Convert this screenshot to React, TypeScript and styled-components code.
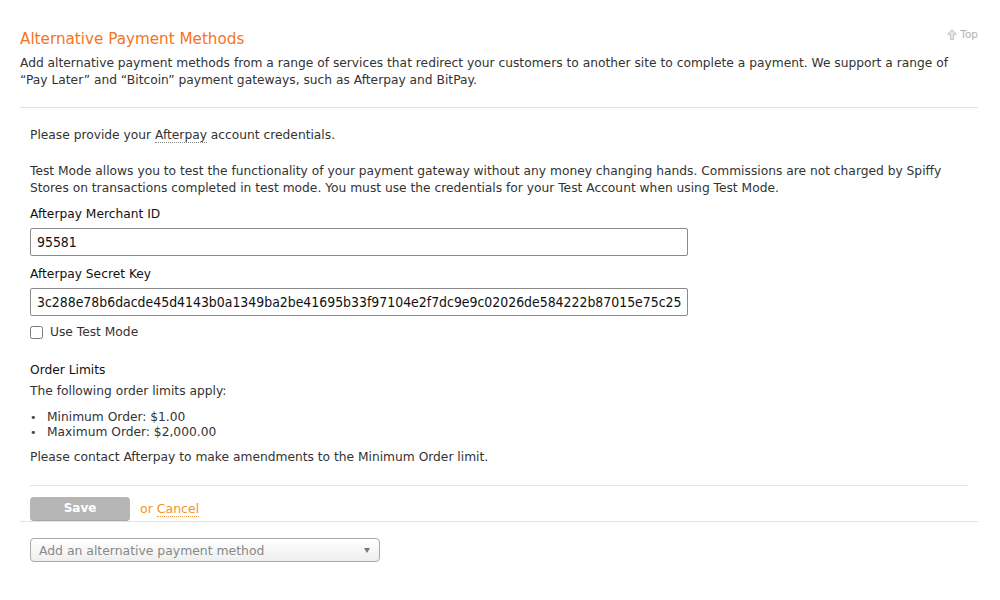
import React from "react";
import styled, { createGlobalStyle } from "styled-components";

const Global = createGlobalStyle`
  html, body { margin: 0; padding: 0; background: #fff; }
  body { font-family: "DejaVu Sans", "Lucida Grande", sans-serif; font-size: 12.25px; color: #333; }
`;

const Page = styled.div`
  padding: 25px 22px 30px 20px;
  width: 958px;
`;

const Header = styled.div`
  display: flex;
  justify-content: space-between;
  align-items: flex-start;
`;

const Title = styled.h2`
  margin: 4px 0 0;
  font-size: 15.2px;
  font-weight: normal;
  color: #f47421;
  line-height: 20px;
`;

const TopLink = styled.a`
  display: flex;
  align-items: center;
  gap: 3px;
  margin-top: 3px;
  font-size: 10.5px;
  color: #b3b3b3;
  text-decoration: none;
`;

const Desc = styled.p`
  margin: 6px 0 0;
  line-height: 17px;
`;

const Rule = styled.hr<{ $inset?: boolean; $top?: number }>`
  border: 0;
  border-top: 1px solid #e4e4e4;
  margin: ${(p) => p.$top ?? 0}px ${(p) => (p.$inset ? "10px" : "0")} 0;
`;

const Section = styled.div`
  padding: 19px 10px 0;
`;

const Para = styled.p<{ $top?: number }>`
  margin: ${(p) => p.$top ?? 0}px 0 0;
  line-height: 17px;
`;

const Abbr = styled.span`
  border-bottom: 1px dotted #888;
`;

const Label = styled.label<{ $top?: number }>`
  display: block;
  color: #111;
  margin-top: ${(p) => p.$top ?? 9}px;
  line-height: 17px;
  height: 17px;
`;

const Input = styled.input`
  display: block;
  box-sizing: border-box;
  width: 658px;
  height: 28px;
  margin-top: 5px;
  padding: 0 6px;
  border: 1px solid #8a8a8a;
  border-radius: 2px;
  font-family: "DejaVu Sans Condensed", "DejaVu Sans", sans-serif;
  font-size: 13.9px;
  color: #111;
  background: #fff;
`;

const CheckRow = styled.label`
  display: flex;
  align-items: center;
  gap: 7px;
  margin-top: 8px;
  height: 17px;
  line-height: 17px;
`;

const Check = styled.input`
  width: 13px;
  height: 13px;
  margin: 0;
`;

const SubHead = styled.div`
  margin-top: 21px;
  color: #111;
  font-weight: 500;
  line-height: 17px;
  height: 17px;
`;

const List = styled.ul`
  margin: 10px 0 0;
  padding: 0;
  list-style: none;
`;

const Item = styled.li`
  display: flex;
  align-items: center;
  height: 15px;
  line-height: 15px;
  &::before {
    content: "•";
    width: 17px;
    font-size: 11px;
    color: #444;
  }
`;

const Actions = styled.div`
  display: flex;
  align-items: center;
  gap: 10px;
  padding: 10px 10px 0;
  height: 25px;
`;

const SaveButton = styled.button`
  width: 100px;
  height: 24px;
  border: 0;
  border-radius: 4px;
  background: #b6b6b6;
  border-bottom: 1px dotted #999;
  color: #fff;
  font-family: inherit;
  font-size: 12px;
  font-weight: bold;
`;

const Cancel = styled.span`
  color: #f7931e;
  font-size: 12.5px;
  span { border-bottom: 1px dotted #f7a04a; }
`;

const SelectBox = styled.div`
  margin: 16px 10px 0;
  width: 350px;
  height: 24px;
  box-sizing: border-box;
  border: 1px solid #a9a9a9;
  border-radius: 4px;
  background: linear-gradient(#fff, #efefef);
  display: flex;
  align-items: center;
  justify-content: space-between;
  padding: 0 9px 0 8px;
  color: #888;
  font-size: 12.4px;
`;

const Arrow = styled.span`
  width: 0;
  height: 0;
  border-left: 3.5px solid transparent;
  border-right: 3.5px solid transparent;
  border-top: 5px solid #777;
`;

export default function App() {
  return (
    <>
      <Global />
      <Page>
        <Header>
          <Title>Alternative Payment Methods</Title>
          <TopLink href="#">
            <svg width="10" height="11" viewBox="0 0 10 11">
              <path d="M5 0.6 L9.4 5.2 L6.6 5.2 L6.6 10.4 L3.4 10.4 L3.4 5.2 L0.6 5.2 Z" fill="#e6e6e6" stroke="#b8b8b8" strokeWidth="0.8" strokeLinejoin="round" />
            </svg>
            Top
          </TopLink>
        </Header>
        <Desc>
          Add alternative payment methods from a range of services that redirect your customers to another site to complete a payment. We support a range of “Pay Later” and “Bitcoin” payment gateways, such as Afterpay and BitPay.
        </Desc>
        <Rule $top={18} />
        <Section>
          <Para>Please provide your <Abbr>Afterpay</Abbr> account credentials.</Para>
          <Para $top={19}>
            Test Mode allows you to test the functionality of your payment gateway without any money changing hands. Commissions are not charged by Spiffy Stores on transactions completed in test mode. You must use the credentials for your Test Account when using Test Mode.
          </Para>
          <Label>Afterpay Merchant ID</Label>
          <Input defaultValue="95581" />
          <Label $top={10}>Afterpay Secret Key</Label>
          <Input defaultValue="3c288e78b6dacde45d4143b0a1349ba2be41695b33f97104e2f7dc9e9c02026de584222b87015e75c25" />
          <CheckRow><Check type="checkbox" /> Use Test Mode</CheckRow>
          <SubHead>Order Limits</SubHead>
          <Para $top={4}>The following order limits apply:</Para>
          <List>
            <Item>Minimum Order: $1.00</Item>
            <Item>Maximum Order: $2,000.00</Item>
          </List>
          <Para $top={9}>Please contact Afterpay to make amendments to the Minimum Order limit.</Para>
        </Section>
        <Rule $inset $top={19} />
        <Actions>
          <SaveButton>Save</SaveButton>
          <Cancel>or <span>Cancel</span></Cancel>
        </Actions>
        <Rule />
        <SelectBox>
          Add an alternative payment method
          <Arrow />
        </SelectBox>
      </Page>
    </>
  );
}
